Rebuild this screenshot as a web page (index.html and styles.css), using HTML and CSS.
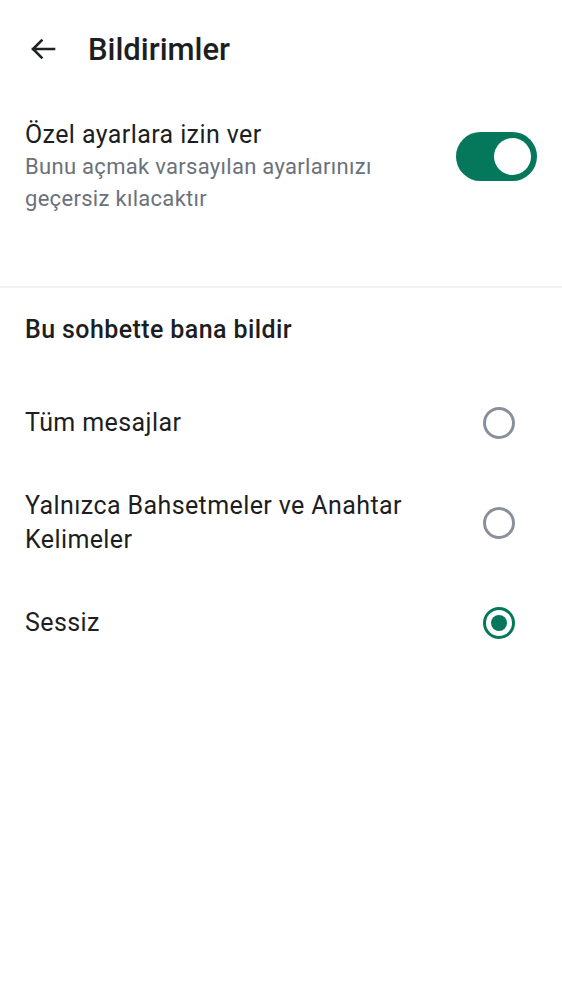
FILE: index.html
```html
<!DOCTYPE html>
<html lang="tr">
<head>
<meta charset="utf-8">
<title>Bildirimler</title>
<link rel="stylesheet" href="styles.css">
</head>
<body>
<div class="screen">
  <header class="appbar">
    <button class="back" aria-label="Geri">
      <svg width="26" height="22" viewBox="0 0 26 22"><path d="M24 11H3M11.5 2.5L3 11l8.5 8.5" fill="none" stroke="#1f2125" stroke-width="2.6" stroke-linecap="square"/></svg>
    </button>
    <h1 class="title">Bildirimler</h1>
  </header>

  <section class="setting">
    <div class="setting-text">
      <div class="setting-title">Özel ayarlara izin ver</div>
      <div class="setting-sub">Bunu açmak varsayılan ayarlarınızı geçersiz kılacaktır</div>
    </div>
    <div class="switch on"><div class="knob"></div></div>
  </section>

  <div class="divider"></div>

  <h2 class="section-title">Bu sohbette bana bildir</h2>

  <div class="options">
    <div class="option">
      <span class="option-label">Tüm mesajlar</span>
      <span class="radio"></span>
    </div>
    <div class="option">
      <span class="option-label">Yalnızca Bahsetmeler ve Anahtar Kelimeler</span>
      <span class="radio"></span>
    </div>
    <div class="option">
      <span class="option-label">Sessiz</span>
      <span class="radio checked"></span>
    </div>
  </div>
</div>
</body>
</html>
```

FILE: styles.css
```css
* { box-sizing: border-box; }
html, body { margin: 0; padding: 0; background: #ffffff; }
body { font-family: Roboto, "Noto Sans", sans-serif; color: #1d1e22; }
.screen { width: 562px; min-height: 1000px; }

.appbar {
  display: flex;
  align-items: center;
  height: 98px;
  padding-left: 30px;
}
.back {
  border: 0;
  background: none;
  padding: 0;
  width: 28px;
  height: 24px;
  display: flex;
  align-items: center;
  margin-right: 30px;
}
.title {
  margin: 0;
  font-size: 31px;
  font-weight: 500;
  color: #1d1e22;
}

.setting {
  display: flex;
  align-items: flex-start;
  padding: 21px 25px 0 25px;
  height: 188px;
}
.setting-text { flex: 1; padding-right: 60px; }
.setting-title {
  font-size: 25px;
  line-height: 32px;
  letter-spacing: 0.4px;
  color: #1d1e22;
}
.setting-sub {
  font-size: 22px;
  line-height: 32px;
  letter-spacing: 0.3px;
  color: #6b717a;
}
.switch {
  width: 81px;
  height: 49px;
  border-radius: 25px;
  background: #05785c;
  margin-top: 13px;
  display: flex;
  align-items: center;
  justify-content: flex-end;
  padding-right: 6px;
  flex-shrink: 0;
}
.knob {
  width: 37px;
  height: 37px;
  border-radius: 50%;
  background: #fff;
}

.divider { height: 2px; background: #f1f1f6; }

.section-title {
  margin: 0;
  padding: 26px 25px 0;
  height: 85px;
  font-size: 25px;
  font-weight: 500;
  letter-spacing: 0.4px;
  line-height: 32px;
}

.options { display: flex; flex-direction: column; }
.option {
  display: flex;
  align-items: center;
  height: 100px;
  padding: 0 47px 0 25px;
}
.option-label {
  flex: 1;
  font-size: 25px;
  line-height: 34px;
  letter-spacing: 0.4px;
  padding-right: 60px;
}
.radio {
  width: 32px;
  height: 32px;
  border-radius: 50%;
  border: 3px solid #8a9099;
  flex-shrink: 0;
  display: flex;
  align-items: center;
  justify-content: center;
}
.radio.checked { border-color: #05785c; }
.radio.checked::after {
  content: "";
  width: 16px;
  height: 16px;
  border-radius: 50%;
  background: #05785c;
}
```
